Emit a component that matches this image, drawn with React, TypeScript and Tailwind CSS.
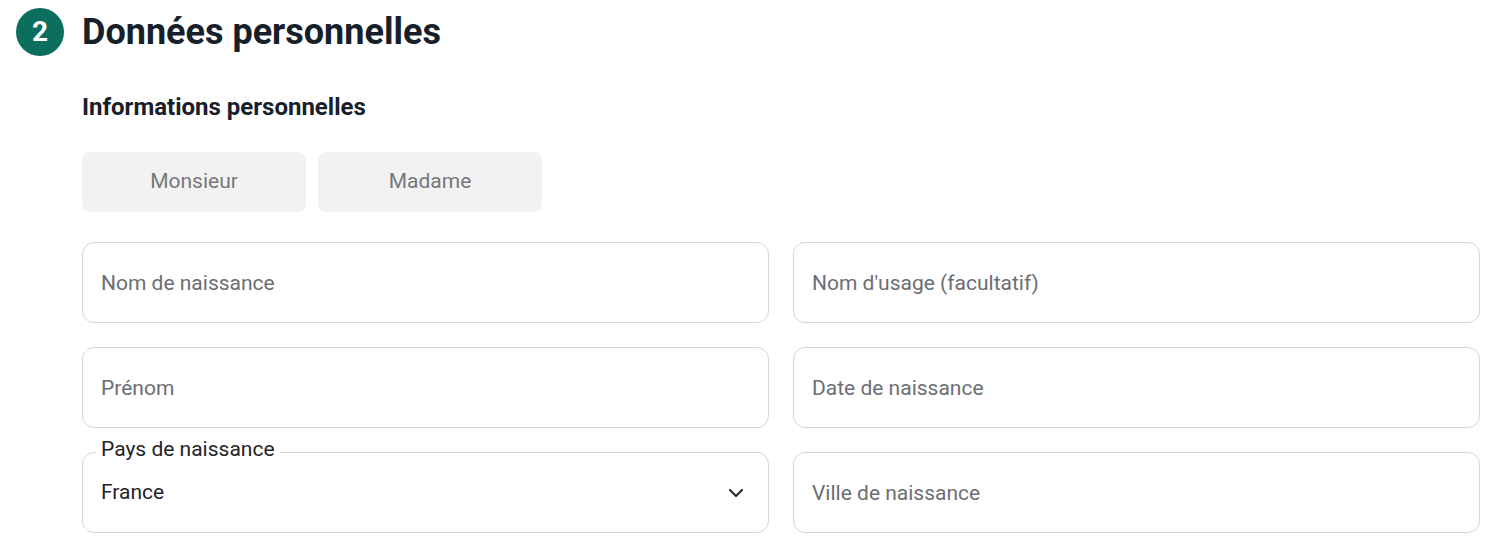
import { ChevronDown } from "lucide-react";

type Field = { label: string };

const LEFT: Field[] = [{ label: "Nom de naissance" }, { label: "Prénom" }];
const RIGHT: Field[] = [
  { label: "Nom d'usage (facultatif)" },
  { label: "Date de naissance" },
  { label: "Ville de naissance" },
];

function TextField({ label }: Field) {
  return (
    <input
      type="text"
      placeholder={label}
      className="h-[81px] w-full rounded-[12px] border border-[#d3d6db] bg-white px-[18px] text-[21px] text-[#1f2328] placeholder:text-[#6b6e73] focus:outline-none"
    />
  );
}

export default function App() {
  return (
    <div
      className="min-h-screen bg-white pl-4 pt-2"
      style={{ fontFamily: "Roboto, 'Liberation Sans', sans-serif" }}
    >
      <div className="flex items-center gap-[18px]">
        <span className="flex h-12 w-12 items-center justify-center rounded-full bg-[#0c6e5c] text-[28px] font-bold leading-none text-white">
          2
        </span>
        <h1 className="text-[36px] font-bold leading-[44px] text-[#17202a]">
          Données personnelles
        </h1>
      </div>

      <div className="ml-[66px] w-[1398px]">
        <h2 className="mt-[35px] text-[24px] font-bold leading-[32px] text-[#17202a]">
          Informations personnelles
        </h2>

        <div className="mt-[29px] flex gap-3">
          {["Monsieur", "Madame"].map((civ) => (
            <button
              key={civ}
              type="button"
              className="h-[60px] w-[224px] rounded-[8px] bg-[#f2f2f2] text-[21px] text-[#75787c]"
            >
              {civ}
            </button>
          ))}
        </div>

        <div className="mt-[30px] grid grid-cols-2 gap-x-6 gap-y-6">
          <TextField label={LEFT[0].label} />
          <TextField label={RIGHT[0].label} />
          <TextField label={LEFT[1].label} />
          <TextField label={RIGHT[1].label} />

          <div className="relative flex h-[81px] items-center justify-between rounded-[12px] border border-[#d3d6db] px-[18px]">
            <span className="absolute -top-[16px] left-[13px] bg-white px-[5px] text-[21px] leading-[24px] text-[#1f2328]">
              Pays de naissance
            </span>
            <span className="text-[21px] text-[#1f2328]">France</span>
            <ChevronDown size={24} strokeWidth={2.2} className="mr-[2px] text-[#2b2f33]" />
          </div>
          <TextField label={RIGHT[2].label} />
        </div>
      </div>
    </div>
  );
}
